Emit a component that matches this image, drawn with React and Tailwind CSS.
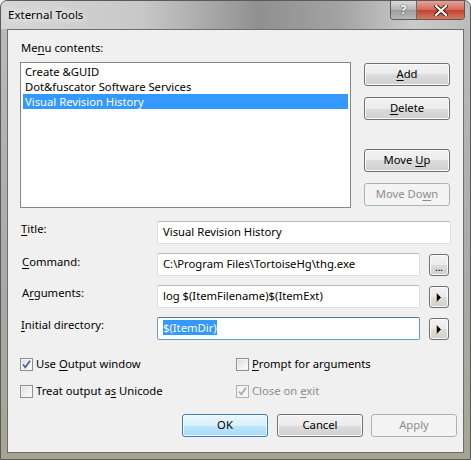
import React from 'react';

const U = ({ children }) => (
  <span className="underline decoration-1 underline-offset-[2px]">{children}</span>
);

function Btn({ children, disabled, primary, className = '' }) {
  const look = disabled
    ? 'border-[#adb2b5] bg-[#f4f4f4] text-[#8d8d8d]'
    : primary
    ? 'border-[#3c7fb1] bg-[linear-gradient(#eaf6fd_0%,#d9f0fc_50%,#bee6fd_50%,#a7d9f5_100%)] shadow-[inset_0_0_0_1px_#f5fbfe] text-black'
    : 'border-[#707070] bg-[linear-gradient(#f2f2f2_0%,#ebebeb_50%,#dddddd_50%,#cfcfcf_100%)] shadow-[inset_0_0_0_1px_#fbfbfb] text-black';
  return (
    <div className={`flex h-[23px] w-[86px] items-center justify-center rounded-[3px] border ${look} ${className}`}>
      <span className="whitespace-pre">{children}</span>
    </div>
  );
}

function SmallBtn({ children }) {
  return (
    <div className="ml-[9px] mt-[1px] flex h-[22px] w-[20px] items-center justify-center rounded-[3px] border border-[#707070] bg-[linear-gradient(#f2f2f2_0%,#ebebeb_50%,#dddddd_50%,#cfcfcf_100%)] shadow-[inset_0_0_0_1px_#fbfbfb]">
      {children}
    </div>
  );
}

const Arrow = () => (
  <svg width="6" height="9" viewBox="0 0 6 9">
    <path d="M1 0.5 L5 4.5 L1 8.5 Z" fill="#000" />
    <path d="M0.5 0 L0.5 9" stroke="#e8a040" strokeWidth="1" />
  </svg>
);

function Field({ label, children }) {
  return (
    <div className="flex h-[23px] items-start">
      <div className="w-[137px] pl-[1px] leading-[16px]">{label}</div>
      {children}
    </div>
  );
}

function Input({ value, width, focused }) {
  return (
    <div
      className={`flex h-[23px] items-center rounded-[2px] border bg-white pl-[5px] ${
        focused ? 'border-[#5d9fd8] border-t-[#3d7bad]' : 'border-[#dbdfe6] border-t-[#b5b8bf]'
      } ${width}`}
    >
      <span>{value}</span>
    </div>
  );
}

function Check({ checked, disabled }) {
  return (
    <div
      className={`flex h-[13px] w-[13px] shrink-0 items-center justify-center border ${
        disabled ? 'border-[#b1b1b1] bg-[#f4f4f4]' : 'border-[#8e8f8f] bg-[linear-gradient(135deg,#dcdcdc,#ffffff)] shadow-[inset_0_0_0_1px_#f4f4f4]'
      }`}
    >
      {checked && (
        <svg width="9" height="9" viewBox="0 0 9 9">
          <path
            d="M1 4.5 L3.3 7.3 L8 0.8"
            fill="none"
            stroke={disabled ? '#a8a8a8' : '#4a5f97'}
            strokeWidth="1.7"
          />
        </svg>
      )}
    </div>
  );
}

function CheckItem({ checked, disabled, children }) {
  return (
    <div className={`flex h-[16px] items-center ${disabled ? 'text-[#8d8d8d]' : ''}`}>
      <Check checked={checked} disabled={disabled} />
      <span className="ml-[3px] whitespace-pre leading-[16px]">{children}</span>
    </div>
  );
}

export default function App() {
  return (
    <div className="h-[460px] w-[471px] overflow-hidden bg-[#f0f0f0]">
      <div
        className="flex h-[460px] w-[471px] flex-col rounded-t-[7px] border border-[#5a5a5a] bg-[linear-gradient(#bcbcbc,#a9a9a9_60%,#a4a690)] text-[11.25px] text-black"
        style={{ fontFamily: '"Noto Sans", "Open Sans", sans-serif' }}
      >
        {/* title bar */}
        <div className="flex h-[28px] items-start justify-between rounded-t-[6px] bg-[linear-gradient(90deg,#d6d6d6_0%,#c8c8c8_30%,#909090_55%,#a2a2a2_72%,#cbcbcb_88%,#bcbcbc_100%)]">
          <div className="pl-[7px] pt-[6px] text-[11.5px] leading-[16px] [text-shadow:0_0_6px_#ffffff,0_0_10px_#ffffff]">
            External Tools
          </div>
          <div className="mr-[5px] flex h-[19px] overflow-hidden rounded-b-[4px] border border-t-0 border-[#5a5a5a]">
            <div className="flex w-[26px] items-center justify-center border-r border-[#6a6a6a] bg-[linear-gradient(#dadada,#b4b4b4_50%,#9c9c9c_50%,#b8b8b8)] text-[13px] font-bold text-white [text-shadow:0_0_1px_#333,0_0_1px_#333]">
              ?
            </div>
            <div className="flex w-[47px] items-center justify-center bg-[linear-gradient(#e6a197,#d0685a_50%,#c0402e_50%,#d8775c)]">
              <svg width="14" height="11" viewBox="0 0 14 11">
                <path d="M2 1 L12 10 M12 1 L2 10" stroke="#3a1a16" strokeWidth="4" strokeLinecap="square" />
                <path d="M2 1 L12 10 M12 1 L2 10" stroke="#ffffff" strokeWidth="2.2" strokeLinecap="square" />
              </svg>
            </div>
          </div>
        </div>

        {/* client area */}
        <div className="ml-[6px] h-[424px] w-[457px] border border-[#6d6d6d] bg-[#f0f0f0]">
          <div className="pl-[13px] pt-[10px] leading-[16px]">
            Me<U>n</U>u contents:
          </div>
          <div className="ml-[12px] mt-[6px] flex">
            <div className="h-[146px] w-[331px] border border-[#828790] bg-white p-[1px]">
              <div className="h-[15px] pl-[3px] leading-[15px]">Create &amp;GUID</div>
              <div className="h-[15px] pl-[3px] leading-[15px]">Dot&amp;fuscator Software Services</div>
              <div className="mx-[1px] h-[15px] bg-[#3399ff] pl-[2px] leading-[15px] text-white">
                Visual Revision History
              </div>
            </div>
            <div className="ml-[13px] flex flex-col pt-[1px]">
              <Btn><U>A</U>dd</Btn>
              <Btn className="mt-[11px]"><U>D</U>elete</Btn>
              <Btn className="mt-[29px]">Move <U>U</U>p</Btn>
              <Btn className="mt-[11px]" disabled>Move Do<U>w</U>n</Btn>
            </div>
          </div>

          <div className="ml-[12px] mt-[13px] flex flex-col gap-[9px]">
            <Field label={<><U>T</U>itle:</>}>
              <Input value="Visual Revision History" width="w-[294px]" />
            </Field>
            <Field label={<span className="block pt-[1px] pl-[1px]"><U>C</U>ommand:</span>}>
              <Input value="C:\Program Files\TortoiseHg\thg.exe" width="w-[263px]" />
              <SmallBtn>
                <span className="mt-[4px] text-[10px] leading-[10px]">...</span>
              </SmallBtn>
            </Field>
            <Field label={<span className="pl-[1px]">A<U>r</U>guments:</span>}>
              <Input value="log $(ItemFilename)$(ItemExt)" width="w-[263px]" />
              <SmallBtn><Arrow /></SmallBtn>
            </Field>
            <Field label={<><U>I</U>nitial directory:</>}>
              <Input
                value={<span className="bg-[#3399ff] text-white leading-[15px]">$(ItemDir)</span>}
                width="w-[263px]"
                focused
              />
              <SmallBtn><Arrow /></SmallBtn>
            </Field>
          </div>

          <div className="ml-[12px] mt-[16px] grid grid-cols-[216px_1fr] gap-y-[11px]">
            <CheckItem checked>Use <U>O</U>utput window</CheckItem>
            <CheckItem><U>P</U>rompt for arguments</CheckItem>
            <CheckItem>Treat output a<U>s</U> Unicode</CheckItem>
            <CheckItem checked disabled>Close on <U>e</U>xit</CheckItem>
          </div>

          <div className="mt-[15px] flex justify-end pr-[6px]">
            <Btn primary>OK</Btn>
            <Btn className="ml-[9px]">Cancel</Btn>
            <Btn className="ml-[8px]" disabled>Apply</Btn>
          </div>
        </div>
      </div>
    </div>
  );
}
